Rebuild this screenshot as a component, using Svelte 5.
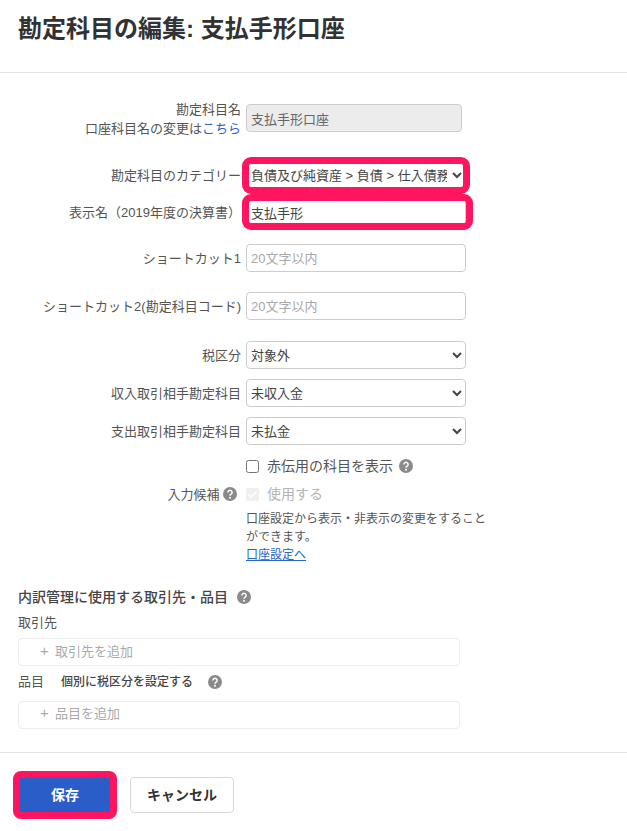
<script lang="ts">
	const selects = [
		{ label: "税区分", value: "対象外" },
		{ label: "収入取引相手勘定科目", value: "未収入金" },
		{ label: "支出取引相手勘定科目", value: "未払金" },
	];
</script>

{#snippet help()}
	<svg class="help" viewBox="0 0 14 14" aria-hidden="true">
		<circle cx="7" cy="7" r="7" fill="#8a8a8a" />
		<path d="M4.9 5.4a2.1 2.1 0 1 1 3.2 1.8c-.7.4-1.1.8-1.1 1.5" fill="none" stroke="#fff" stroke-width="1.5" />
		<circle cx="7" cy="10.8" r="1" fill="#fff" />
	</svg>
{/snippet}

<div class="page">
	<header class="head">
		<h1>勘定科目の編集: 支払手形口座</h1>
	</header>

	<form class="body">
		<div class="row name-row">
			<div class="label">勘定科目名<br />口座科目名の変更は<a href="#top">こちら</a></div>
			<input class="field readonly" value="支払手形口座" disabled />
		</div>

		<div class="row category-row">
			<div class="label">勘定科目のカテゴリー</div>
			<div class="marked">
				<select class="field">
					<option>負債及び純資産 &gt; 負債 &gt; 仕入債務</option>
				</select>
				<span class="mark"></span>
			</div>
		</div>

		<div class="row display-row">
			<div class="label">表示名（2019年度の決算書）</div>
			<div class="marked">
				<input class="field" value="支払手形" />
				<span class="mark"></span>
			</div>
		</div>

		<div class="row shortcut-row">
			<div class="label">ショートカット1</div>
			<input class="field" placeholder="20文字以内" />
		</div>
		<div class="row shortcut-row">
			<div class="label">ショートカット2(勘定科目コード)</div>
			<input class="field" placeholder="20文字以内" />
		</div>

		<div class="select-group">
			{#each selects as item}
				<div class="row">
					<div class="label">{item.label}</div>
					<select class="field">
						<option>{item.value}</option>
					</select>
				</div>
			{/each}
		</div>

		<div class="row check-row">
			<div class="label"></div>
			<label class="check"><input type="checkbox" /><span>赤伝用の科目を表示</span>{@render help()}</label>
		</div>
		<div class="row check-row use-row">
			<div class="label candidate">入力候補 {@render help()}</div>
			<label class="check disabled"><input type="checkbox" checked disabled /><span>使用する</span></label>
		</div>
		<div class="row note-row">
			<div class="label"></div>
			<p class="note">口座設定から表示・非表示の変更をすることができます。<br /><a href="#top">口座設定へ</a></p>
		</div>

		<section class="breakdown">
			<h2>内訳管理に使用する取引先・品目 {@render help()}</h2>
			<div class="sub-label">取引先</div>
			<div class="adder"><span class="plus">+</span>取引先を追加</div>
			<div class="sub-label item-label">
				<span>品目</span>
				<b>個別に税区分を設定する</b>
				{@render help()}
			</div>
			<div class="adder second"><span class="plus">+</span>品目を追加</div>
		</section>
	</form>

	<footer class="foot">
		<div class="marked save">
			<button class="primary" type="button">保存</button>
			<span class="mark"></span>
		</div>
		<button class="secondary" type="button">キャンセル</button>
	</footer>
</div>

<style>
	:global(body) {
		background: #fff;
	}

	.page {
		width: 627px;
		height: 831px;
		overflow: hidden;
		font-family: "Liberation Sans", "Noto Sans CJK JP", sans-serif;
		font-size: 13px;
		line-height: 18px;
		color: #555;
	}

	.head {
		height: 73px;
		box-sizing: border-box;
		padding: 14px 18px 0;
		border-bottom: 1px solid #e4e4e4;
	}

	h1 {
		margin: 0;
		font-size: 24px;
		line-height: 30px;
		font-weight: 700;
		color: #323232;
	}

	.body {
		padding-top: 27px;
	}

	.row {
		display: flex;
		align-items: center;
		gap: 5px;
	}

	.label {
		width: 241px;
		flex: none;
		text-align: right;
		line-height: 19px;
	}

	.label a {
		text-decoration: none;
	}

	a {
		color: #2864d0;
	}

	.field {
		width: 220px;
		height: 28px;
		box-sizing: border-box;
		padding: 0 4px;
		border: 1px solid #ccc;
		border-radius: 4px;
		background: #fff;
		font: inherit;
		color: #444;
	}

	select.field {
		padding: 0;
	}

	.category-row select.field {
		padding-right: 2px;
	}

	.field::placeholder {
		color: #a8a8a8;
	}

	.readonly {
		width: 216px;
		background: #ececec;
		color: #666;
	}

	.name-row {
		height: 38px;
		align-items: flex-start;
	}

	.name-row .readonly {
		margin-top: 4px;
	}

	.category-row {
		margin-top: 20px;
		height: 34px;
	}

	.display-row {
		margin-top: 3px;
		height: 34px;
	}

	.marked {
		position: relative;
		display: flex;
	}

	.mark {
		position: absolute;
		inset: -4px -4px -5px -4px;
		border: 7px solid #ff1460;
		border-radius: 9px;
		pointer-events: none;
	}

	.display-row .mark {
		inset: -4px -7px -4px -4px;
	}

	.shortcut-row {
		margin-top: 12px;
		height: 34px;
	}

	.shortcut-row + .shortcut-row {
		margin-top: 14px;
	}

	.select-group {
		margin-top: 18px;
		display: flex;
		flex-direction: column;
		gap: 10px;
	}

	.check-row {
		margin-top: 11px;
		height: 20px;
	}

	.use-row {
		margin-top: 8px;
	}

	.candidate {
		box-sizing: border-box;
		padding-right: 4px;
	}

	.check {
		display: flex;
		align-items: center;
		gap: 8px;
		font-size: 14px;
	}

	.check input {
		margin: 0;
		width: 13px;
		height: 13px;
	}

	.check .help {
		margin-left: -2px;
	}

	.check.disabled {
		color: #b4b4b4;
	}

	.check.disabled input {
		appearance: none;
		position: relative;
		background: #efefef;
		border-radius: 2px;
	}

	.check.disabled input::after {
		content: "";
		position: absolute;
		left: 4px;
		top: 1px;
		width: 3px;
		height: 7px;
		border: solid #fafafa;
		border-width: 0 2px 2px 0;
		transform: rotate(45deg);
	}

	.help {
		width: 14px;
		height: 14px;
		vertical-align: -2px;
		flex: none;
	}

	.note-row {
		align-items: flex-start;
		margin-top: 6px;
	}

	.note {
		margin: 0;
		width: 244px;
		font-size: 12px;
		line-height: 18px;
	}

	.breakdown {
		margin-top: 24px;
		padding: 0 18px;
	}

	h2 {
		margin: 0;
		font-size: 14px;
		line-height: 18px;
		font-weight: 500;
		color: #444;
	}

	h2 .help {
		margin-left: 5px;
	}

	.sub-label {
		margin-top: 8px;
		line-height: 18px;
	}

	.item-label {
		margin-top: 7px;
		display: flex;
		align-items: center;
	}

	.item-label b {
		margin-left: 17px;
		font-size: 12px;
		font-weight: 500;
		color: #444;
	}

	.item-label .help {
		margin-left: 15px;
	}

	.adder {
		margin-top: 6px;
		width: 442px;
		height: 28px;
		box-sizing: border-box;
		padding: 3px 21px;
		border: 1px solid #ececec;
		border-radius: 4px;
		color: #aaa;
	}

	.adder.second {
		margin-top: 10px;
		padding-top: 2px;
	}

	.plus {
		display: inline-block;
		width: 15px;
		font-size: 15px;
	}

	.foot {
		margin-top: 23px;
		padding: 24px 0 0 20px;
		border-top: 1px solid #e4e4e4;
		display: flex;
		align-items: center;
		gap: 20px;
	}

	.primary,
	.secondary {
		border-radius: 4px;
		font: inherit;
		font-weight: 700;
		font-size: 14px;
	}

	.primary {
		width: 90px;
		height: 34px;
		border: 0;
		border-radius: 0;
		background: #2a5dc8;
		color: #fff;
	}

	.secondary {
		width: 104px;
		height: 36px;
		border: 1px solid #d8d8d8;
		background: #fff;
		color: #333;
	}

	.save .mark {
		inset: -7px;
		border-radius: 8px;
	}
</style>
